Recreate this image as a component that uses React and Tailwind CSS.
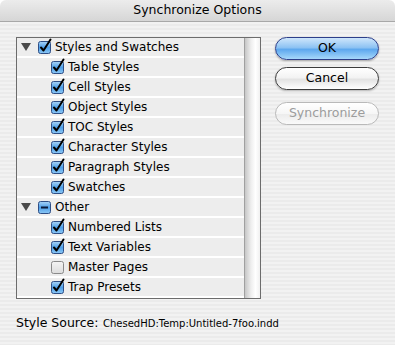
import React from 'react';

const font = { fontFamily: '"DejaVu Sans", "Liberation Sans", sans-serif' };

function Check({ state }) {
  if (state === 'off') {
    return (
      <svg width="13" height="13" viewBox="0 0 13 13" className="shrink-0">
        <defs>
          <linearGradient id="offg" x1="0" y1="0" x2="0" y2="1">
            <stop offset="0" stopColor="#f4f4f4" />
            <stop offset="1" stopColor="#dcdcdc" />
          </linearGradient>
        </defs>
        <rect x="0.5" y="0.5" width="12" height="12" rx="2" fill="url(#offg)" stroke="#8a8a8a" />
      </svg>
    );
  }
  return (
    <svg width="14" height="14" viewBox="0 0 14 14" className="shrink-0 overflow-visible">
      <defs>
        <linearGradient id="ong" x1="0" y1="0" x2="0" y2="1">
          <stop offset="0" stopColor="#a9d4f7" />
          <stop offset="0.5" stopColor="#4f9fe8" />
          <stop offset="1" stopColor="#8cc8f5" />
        </linearGradient>
      </defs>
      <rect x="0.5" y="1.5" width="12" height="12" rx="2" fill="url(#ong)" stroke="#2e4e86" />
      {state === 'on' ? (
        <path d="M3 7.5 L5.5 10.5 L12.5 -0.5" fill="none" stroke="#000" strokeWidth="2" strokeLinecap="round" strokeLinejoin="round" />
      ) : (
        <rect x="3" y="6.5" width="7" height="2" fill="#0a1a3a" />
      )}
    </svg>
  );
}

function Triangle() {
  return (
    <svg width="10" height="8" viewBox="0 0 10 8" className="shrink-0">
      <path d="M0 0 H10 L5 8 Z" fill="#4a4a4a" />
    </svg>
  );
}

const rows = [
  { label: 'Styles and Swatches', level: 0, state: 'on' },
  { label: 'Table Styles', level: 1, state: 'on' },
  { label: 'Cell Styles', level: 1, state: 'on' },
  { label: 'Object Styles', level: 1, state: 'on' },
  { label: 'TOC Styles', level: 1, state: 'on' },
  { label: 'Character Styles', level: 1, state: 'on' },
  { label: 'Paragraph Styles', level: 1, state: 'on' },
  { label: 'Swatches', level: 1, state: 'on' },
  { label: 'Other', level: 0, state: 'mixed' },
  { label: 'Numbered Lists', level: 1, state: 'on' },
  { label: 'Text Variables', level: 1, state: 'on' },
  { label: 'Master Pages', level: 1, state: 'off' },
  { label: 'Trap Presets', level: 1, state: 'on' },
];

function Row({ row }) {
  return (
    <div className="h-[20px] flex items-center bg-[#ededed] border-b-2 border-white text-[12px] text-black">
      {row.level === 0 ? (
        <div className="flex items-center">
          <div className="w-[21px] pl-[4px] flex"><Triangle /></div>
          <div className="w-[17px] flex"><Check state={row.state} /></div>
        </div>
      ) : (
        <div className="flex items-center pl-[34px]">
          <div className="w-[17px] flex"><Check state={row.state} /></div>
        </div>
      )}
      <span className="leading-none">{row.label}</span>
    </div>
  );
}

function Button({ children, kind }) {
  const cls =
    kind === 'ok'
      ? 'border-[#2d3f8a] bg-[linear-gradient(#cfe6fb_0%,#8ec3f3_45%,#5ea8ee_55%,#a6d8fb_100%)] text-black shadow-[0_1px_2px_rgba(0,0,0,0.3)]'
      : kind === 'off'
      ? 'border-[#b9b9b9] bg-[linear-gradient(#ffffff_0%,#f6f6f6_50%,#ececec_55%,#fafafa_100%)] text-[#9c9c9c]'
      : 'border-[#3c3c3c] bg-[linear-gradient(#ffffff_0%,#f3f3f3_45%,#e3e3e3_55%,#ffffff_100%)] text-black shadow-[0_1px_2px_rgba(0,0,0,0.25)]';
  return (
    <div className={`h-[23px] w-[104px] rounded-full border flex items-center justify-center text-[12.5px] ${cls}`}>
      {children}
    </div>
  );
}

export default function App() {
  return (
    <div className="w-[395px] h-[345px] bg-white overflow-hidden" style={font}>
      <div className="w-[395px] h-[345px] rounded-t-[6px] overflow-hidden flex flex-col">
        <div className="h-[22px] shrink-0 flex items-center justify-center bg-[linear-gradient(#ececec,#d6d6d6)] border-b border-[#a8a8a8] text-[12.5px] text-black">
          Synchronize Options
        </div>
        <div className="flex-1 bg-[repeating-linear-gradient(#f2f2f2_0px,#f2f2f2_2px,#ebebeb_2px,#ebebeb_4px)] flex flex-col">
          <div className="flex">
            <div className="ml-[16px] mt-[15px] w-[245px] h-[262px] border border-[#6c6c6c] flex bg-white">
              <div className="flex-1 flex flex-col">
                {rows.map((r) => (
                  <Row key={r.label} row={r} />
                ))}
              </div>
              <div className="w-[16px] border-l border-[#a0a0a0] bg-[linear-gradient(90deg,#c6c6c6,#eeeeee_40%,#ffffff_70%,#f0f0f0)]" />
            </div>
            <div className="ml-[14px] mt-[15px] flex flex-col gap-[7px]">
              <Button kind="ok">OK</Button>
              <Button>Cancel</Button>
              <div className="mt-[5px]">
                <Button kind="off">Synchronize</Button>
              </div>
            </div>
          </div>
          <div className="flex items-baseline ml-[16px] mt-[15px]">
            <span className="text-[12.5px] text-black w-[87px]">Style Source:</span>
            <span className="text-[10px] text-black">ChesedHD:Temp:Untitled-7foo.indd</span>
          </div>
        </div>
      </div>
    </div>
  );
}
